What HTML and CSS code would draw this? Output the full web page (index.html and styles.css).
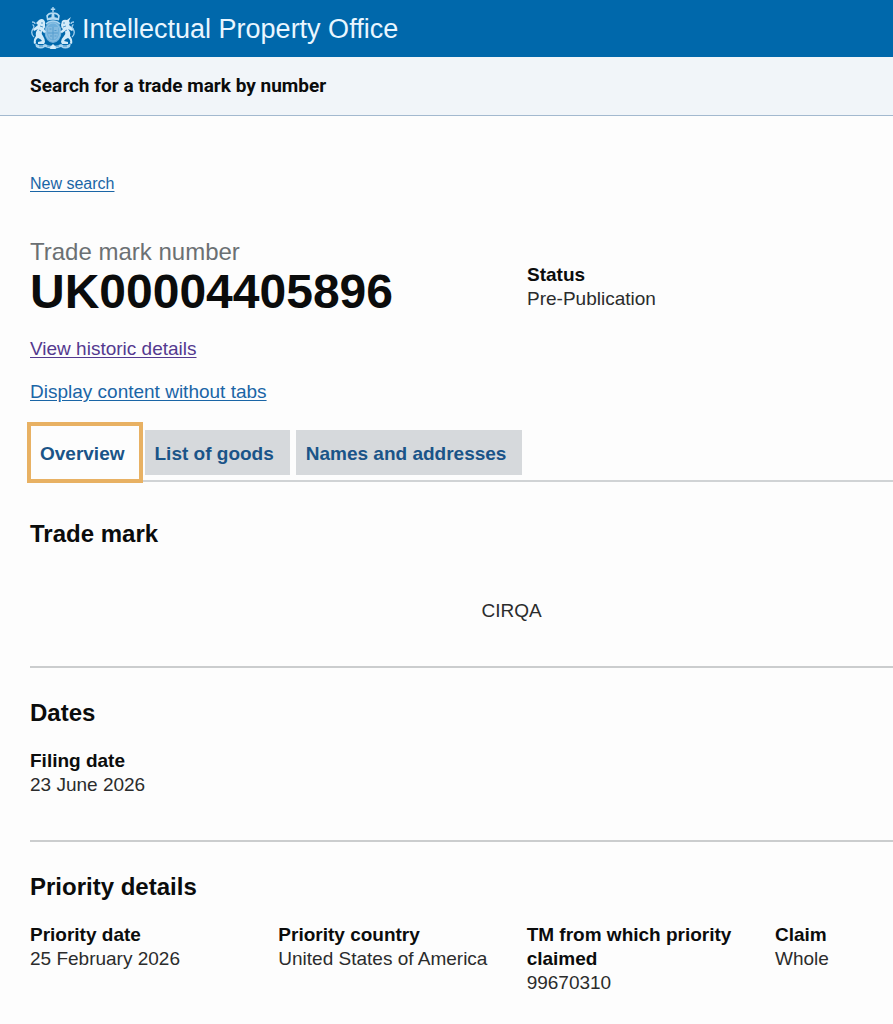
FILE: index.html
```html
<!DOCTYPE html>
<html lang="en">
<head>
    <meta charset="UTF-8">
    <meta name="viewport" content="width=device-width, initial-scale=1.0">
    <title>Search for a trade mark by number - Intellectual Property Office</title>
    <link rel="stylesheet" href="styles.css">
</head>
<body>
    <header class="site-header">
        <svg class="crest" viewBox="0 1 44 44" aria-hidden="true">
            <!-- crown -->
            <g fill="#b4daf2">
                <path d="M21.3 1h1.4v1.6h1.5v1.3h-1.5v2h-1.4v-2h-1.5V2.600h1.500z"/>
                <path d="M16 14.500L15.200 9.500Q17 6.300 22 6.200Q27 6.300 28.800 9.500L28 14.500Q22 13 16 14.500zM17.300 12.200Q18.700 11.500 20.400 11.300L20.700 8Q17.800 8.400 17 10zM23.600 11.300Q25.300 11.500 26.700 12.200L27 10Q26.200 8.400 23.300 8z" fill-rule="evenodd"/>
            </g>
            <!-- shield and garter -->
            <ellipse cx="22" cy="26" rx="8.500" ry="11" fill="#6eafdb"/>
            <ellipse cx="22" cy="26" rx="7" ry="9.200" fill="none" stroke="#8cc1e4" stroke-width="1.200"/>
            <path d="M17 21h10v6q0 5-5 7q-5-2-5-7z" fill="#84bbe0"/>
            <path d="M22 21v13M17 27h10M18.500 23h2M23.500 24.500h2M19 30h2M23.500 30h2" stroke="#559cce" fill="none"/>
            <path d="M15 18q3-3 7-3t7 3" stroke="#a9d4ef" stroke-width="1.500" fill="none"/>
            <!-- lion -->
            <path d="M8 14q3-2 5 0q2 2 1 5q1 2-1 4l2 3l-2 1l-2-2q-1 3 1 5q2 3 2 6l-1 2H7v-2l4-1q-1-2-4-3q-3 2-2 5l-2 1q-1-5 2-8q-1-4 2-7l-4 2l-1-2l5-4l-2-2z" fill="#d3ebf9"/>
            <path d="M3 31Q-1 27 2 23Q4 20 1.500 18.500M1 16q3 0 3 2" stroke="#9fcdec" stroke-width="1.300" fill="none"/>
            <path d="M10 17h2M9 20l3 1M8 24l2 1" stroke="#2c83c0" stroke-width=".8" fill="none"/>
            <!-- unicorn -->
            <path d="M38 15l2-4l-4 3q-3-1-5 1l-1 4q0 3 2 4l-3 3l2 1l3-2q1 3-1 5q-3 3-3 6l1 2h6v-2l-4-1q1-2 4-3q3 2 2 5l2 1q1-5-2-8q1-4-2-7l4 2l2-2l-5-4l1-2z" fill="#d3ebf9"/>
            <path d="M41 31Q45 27 42 23Q40 20 42.500 18.500M43 16q-3 0-3 2" stroke="#9fcdec" stroke-width="1.300" fill="none"/>
            <path d="M32 17h2M32 21l3-1M34 25l2-1" stroke="#2c83c0" stroke-width=".8" fill="none"/>
            <!-- motto scroll -->
            <path d="M4 37q5 4 10 1q8 4 16 0q5 3 10-1l-1 4q-5 3-9 0q-8 3-16 0q-4 3-9 0z" fill="#a9d4ef"/>
            <path d="M8 40h4M16 40h3M25 40h3M32 40h4" stroke="#3f8fc6" fill="none"/>
            <path d="M20 40l2-2l2 2l1 3h-6z" fill="#d8eefa"/>
        </svg>
        <span class="org-name">Intellectual Property Office</span>
    </header>

    <div class="service-bar">
        <span class="service-name">Search for a trade mark by number</span>
    </div>

    <main class="container">
        <a href="#" class="new-search">New search</a>

        <div class="summary">
            <div>
                <span class="caption">Trade mark number</span>
                <h1>UK00004405896</h1>
            </div>
            <dl class="status">
                <dt>Status</dt>
                <dd>Pre-Publication</dd>
            </dl>
        </div>

        <div class="page-links">
            <a href="#" class="visited">View historic details</a>
            <a href="#">Display content without tabs</a>
        </div>

        <nav class="tabs">
            <a href="#overview" class="tab selected">Overview</a>
            <a href="#goods" class="tab">List of goods</a>
            <a href="#names" class="tab">Names and addresses</a>
        </nav>

        <section id="overview">
            <h2>Trade mark</h2>
            <p class="mark">CIRQA</p>
        </section>

        <section>
            <h2>Dates</h2>
            <dl class="details">
                <div>
                    <dt>Filing date</dt>
                    <dd>23 June 2026</dd>
                </div>
            </dl>
        </section>

        <section>
            <h2>Priority details</h2>
            <dl class="details">
                <div>
                    <dt>Priority date</dt>
                    <dd>25 February 2026</dd>
                </div>
                <div>
                    <dt>Priority country</dt>
                    <dd>United States of America</dd>
                </div>
                <div>
                    <dt>TM from which priority claimed</dt>
                    <dd>99670310</dd>
                </div>
                <div>
                    <dt>Claim</dt>
                    <dd>Whole</dd>
                </div>
            </dl>
        </section>
    </main>
</body>
</html>
```
FILE: styles.css
```css
body {
    margin: 0;
    background: #fdfdfd;
    color: #0b0c0c;
    font-family: "Liberation Sans", Arial, sans-serif;
    font-size: 19px;
    line-height: 24px;
}

h1, h2, p, dl, dd {
    margin: 0;
}

a {
    color: #1a65a6;
    text-underline-offset: 2px;
}

a.visited {
    color: #54398f;
}

.site-header {
    display: flex;
    align-items: center;
    height: 57px;
    padding: 0 30px;
    background: #0068ab;
}

.crest {
    width: 46px;
    height: 44px;
    margin-right: 6px;
}

.org-name {
    color: #e9f6ff;
    font-size: 27px;
    line-height: 30px;
}

.service-bar {
    padding: 17px 30px;
    background: #f1f5f9;
    border-bottom: 1px solid #a3b9cf;
}

.service-name {
    font-family: Roboto, "Liberation Sans", sans-serif;
    font-weight: bold;
}

.container {
    margin-left: 30px;
    padding: 58px 0 30px;
}

.new-search {
    display: block;
    width: fit-content;
    font-size: 16px;
    line-height: 20px;
}

.summary {
    display: grid;
    grid-template-columns: 1fr 366px;
    gap: 30px;
    margin-top: 43px;
}

.caption {
    display: block;
    color: #6b7073;
    font-size: 24px;
    line-height: 30px;
}

h1 {
    font-size: 48px;
    line-height: 50px;
}

.status {
    padding-top: 26px;
}

dt {
    font-weight: bold;
}

dd {
    color: #2b2c2c;
}

.page-links {
    display: flex;
    flex-direction: column;
    align-items: flex-start;
    gap: 19px;
    margin-top: 20px;
}

.tabs {
    display: flex;
    align-items: center;
    gap: 6px;
    height: 61px;
    margin-top: 18px;
    box-shadow: inset 0 -1px #fdfdfd, inset 0 -3px #d0d3d5;
}

.tab {
    padding: 12px 16px 9px 10px;
    background: #d6d9dc;
    color: #1a5488;
    font-weight: bold;
    text-decoration: none;
}

.selected {
    margin: 0 -4px 0 -3px;
    padding: 16px 14px 13px 9px;
    border: 4px solid #e8b163;
    background: #fdfdfd;
}

h2 {
    font-size: 24px;
    line-height: 30px;
}

section {
    padding: 30px 0 43px;
    border-bottom: 2px solid #cbcdce;
}

section:last-child {
    border-bottom: none;
}

.tabs + section {
    padding-top: 36px;
}

.mark {
    margin-top: 50px;
    padding-left: 100px;
    color: #2b2c2c;
    text-align: center;
}

.details {
    display: grid;
    grid-template-columns: repeat(3, 1fr) 118px;
    gap: 30px;
    margin-top: 21px;
}
```
